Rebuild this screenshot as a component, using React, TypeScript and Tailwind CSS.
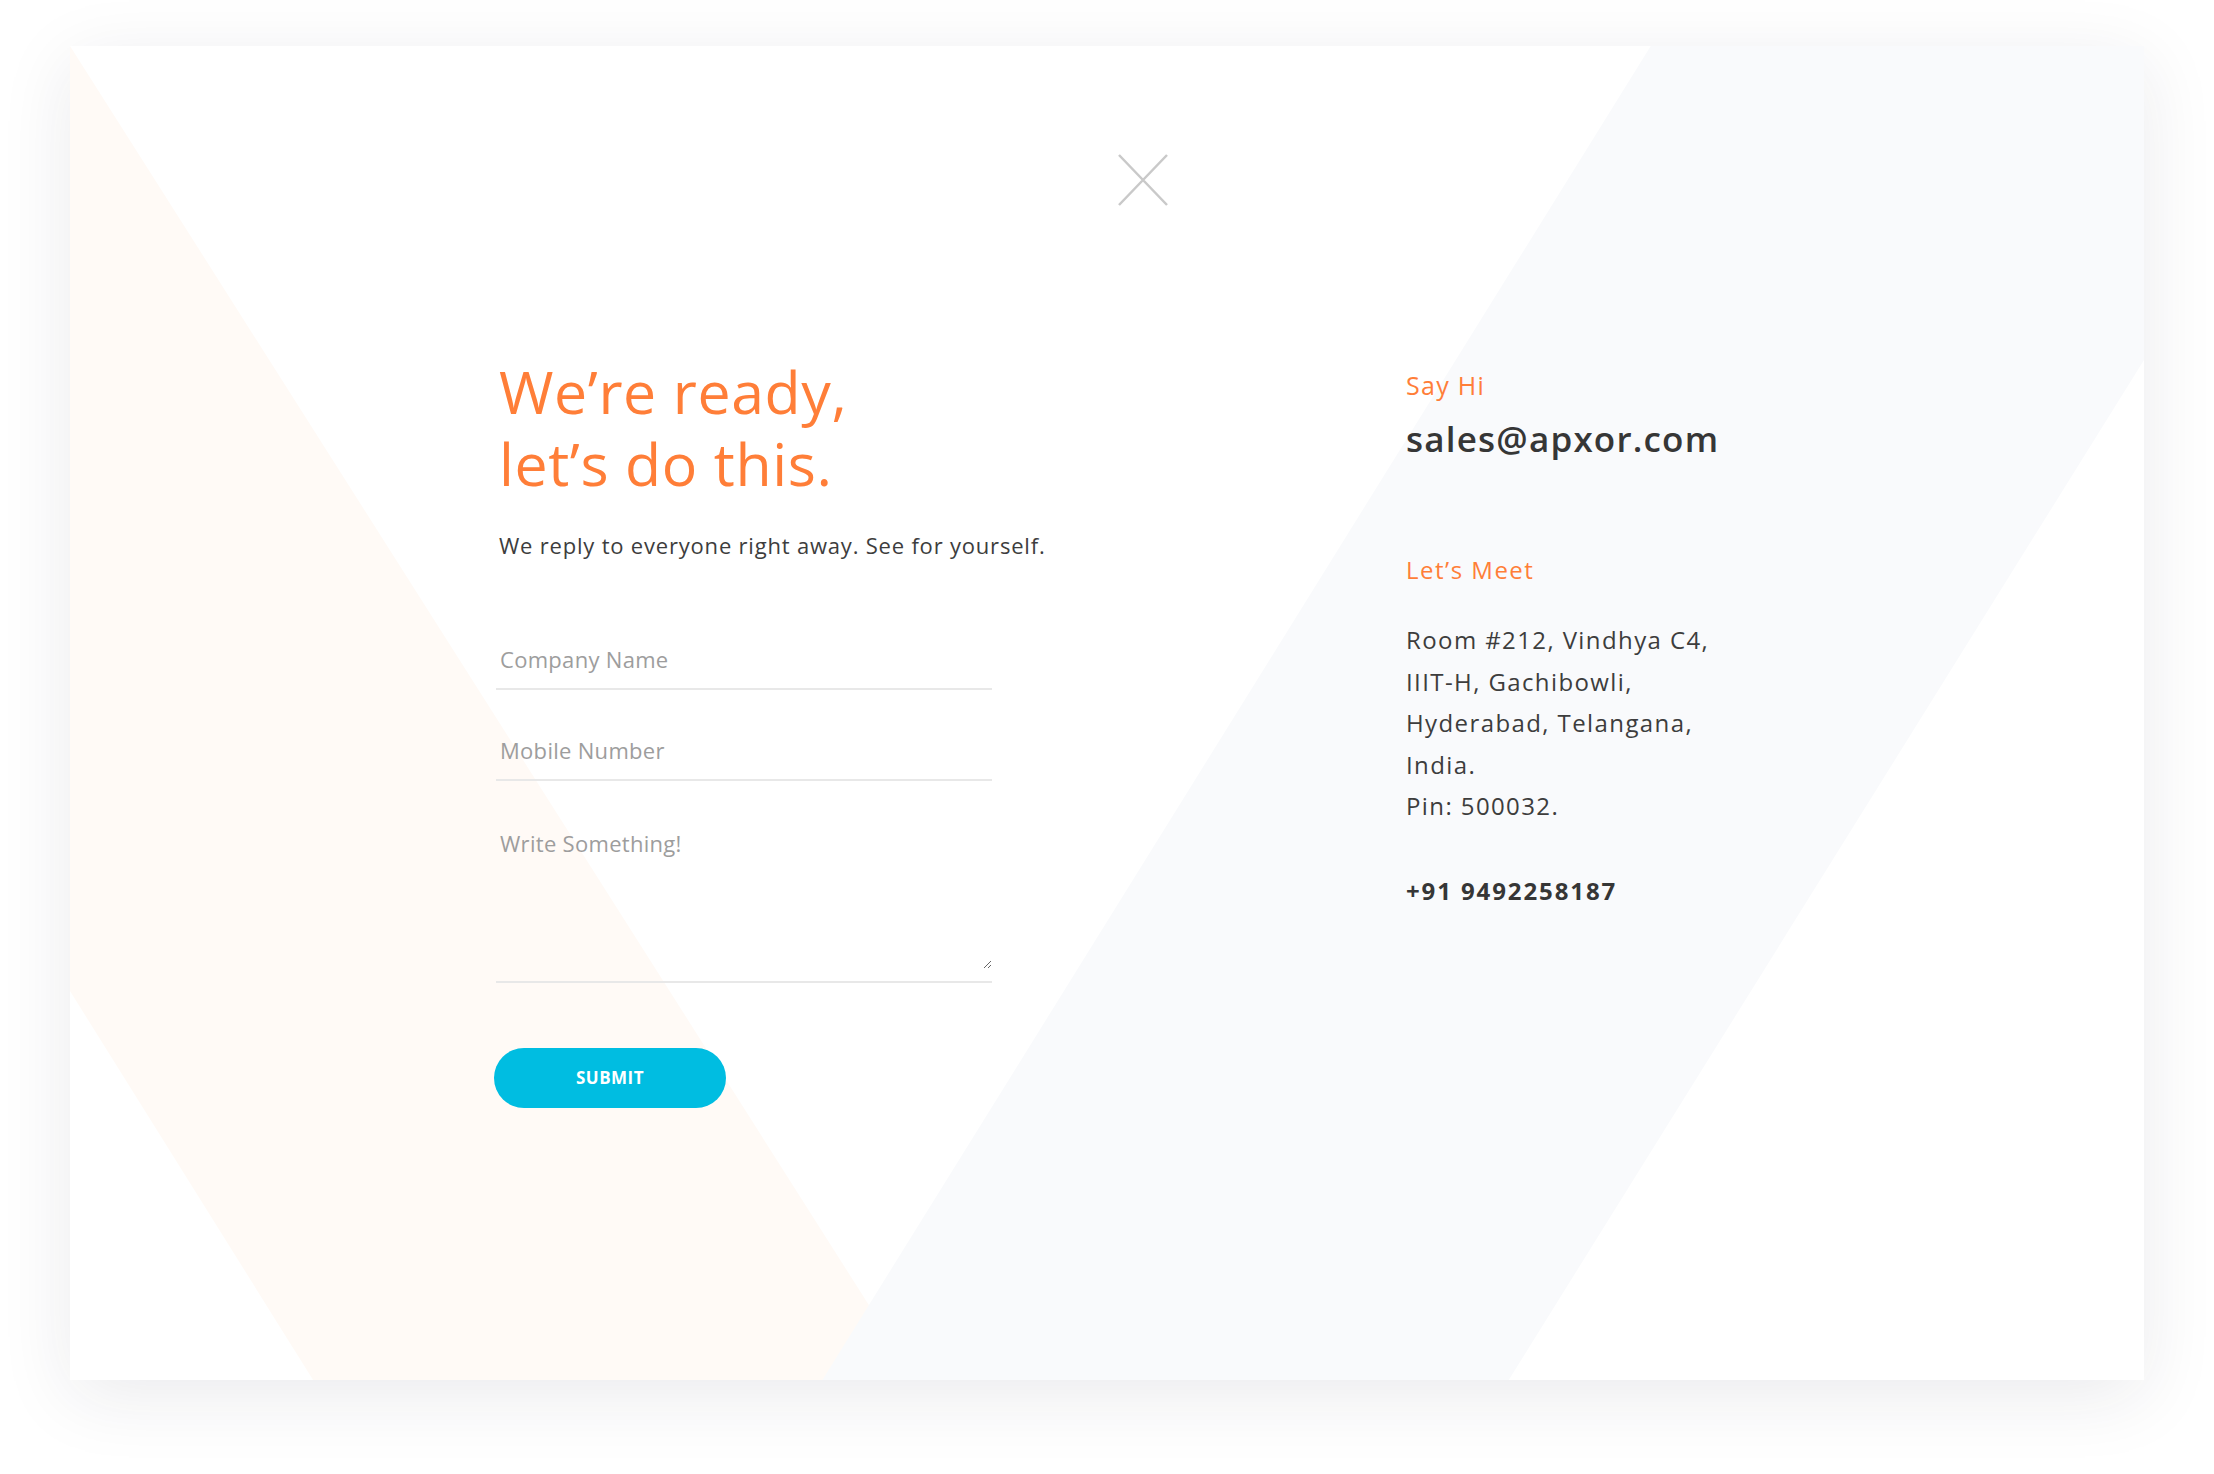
import React from 'react';

const CloseIcon: React.FC = () => (
  <svg width="50" height="52" viewBox="0 0 50 52" fill="none">
    <path d="M1 1L49 51M49 1L1 51" stroke="#c9c9c9" strokeWidth="2.5" />
  </svg>
);

export default function App() {
  return (
    <div className="min-h-screen bg-white px-[70px] pt-[46px] pb-[94px] font-['Open_Sans',sans-serif]">
      <div className="relative h-[1334px] overflow-hidden bg-white shadow-[0_16px_70px_rgba(30,30,60,0.09)]">
        {/* diagonal background bands */}
        <svg
          className="absolute inset-0 h-full w-full"
          viewBox="0 0 2073 1334"
          preserveAspectRatio="none"
        >
          <polygon points="0,0 846,1334 243,1334 0,945" fill="#fffaf6" />
          <polygon points="1580,0 2073,0 2073,314 1438,1334 752,1334" fill="#f9fafc" />
        </svg>

        <div className="relative flex flex-col">
          <div className="pt-[108px] pl-[1048px]">
            <button className="block">
              <CloseIcon />
            </button>
          </div>

          <div className="flex pl-[426px] pt-[149px]">
            {/* form */}
            <div className="w-[910px] flex flex-col">
              <h1 className="ml-[3px] text-[59px] leading-[72px] font-normal tracking-[0.6px] text-[#ff7e38]">
                We’re ready,
                <br />
                let’s do this.
              </h1>
              <p className="ml-[3px] mt-[30px] text-[22px] leading-[32px] tracking-[0.8px] text-[#3d3d3d]">
                We reply to everyone right away. See for yourself.
              </p>

              <form className="mt-[69px] flex flex-col gap-[31px]">
                <input
                  type="text"
                  placeholder="Company Name"
                  className="w-[496px] h-[60px] border-b-2 border-[#e8e8e8] bg-transparent px-[4px] text-[22px] tracking-[0.3px] text-[#3d3d3d] placeholder:text-[#9d9d9d] outline-none"
                />
                <input
                  type="text"
                  placeholder="Mobile Number"
                  className="w-[496px] h-[60px] border-b-2 border-[#e8e8e8] bg-transparent px-[4px] text-[22px] tracking-[0.3px] text-[#3d3d3d] placeholder:text-[#9d9d9d] outline-none"
                />
                <div className="w-[496px] border-b-2 border-[#e8e8e8] pb-[12px]">
                  <textarea
                    placeholder="Write Something!"
                    className="block w-full h-[157px] bg-transparent px-[4px] pt-[15px] text-[22px] leading-[32px] tracking-[0.3px] text-[#3d3d3d] placeholder:text-[#9d9d9d] outline-none"
                  />
                </div>
              </form>

              <button className="mt-[65px] ml-[-2px] h-[60px] w-[232px] rounded-full bg-[#00bde1] text-[17px] font-bold tracking-[0.5px] text-white">
                SUBMIT
              </button>
            </div>

            {/* contact info */}
            <div className="pt-[14px] flex flex-col">
              <p className="text-[25px] leading-[32px] tracking-[1.3px] text-[#ff7e38]">Say Hi</p>
              <p className="mt-[18px] text-[35px] leading-[40px] font-semibold tracking-[1.2px] text-[#363636]">
                sales@apxor.com
              </p>

              <p className="mt-[95px] text-[24px] leading-[32px] tracking-[1.5px] text-[#ff7e38]">Let’s Meet</p>
              <p className="mt-[33px] text-[24px] leading-[41.6px] tracking-[1.4px] text-[#3d3d3d]">
                Room #212, Vindhya C4,
                <br />
                IIIT-H, Gachibowli,
                <br />
                Hyderabad, Telangana,
                <br />
                India.
                <br />
                Pin: 500032.
              </p>

              <p className="mt-[48px] text-[24px] leading-[32px] font-bold tracking-[1.9px] text-[#363636]">
                +91 9492258187
              </p>
            </div>
          </div>
        </div>
      </div>
    </div>
  );
}
